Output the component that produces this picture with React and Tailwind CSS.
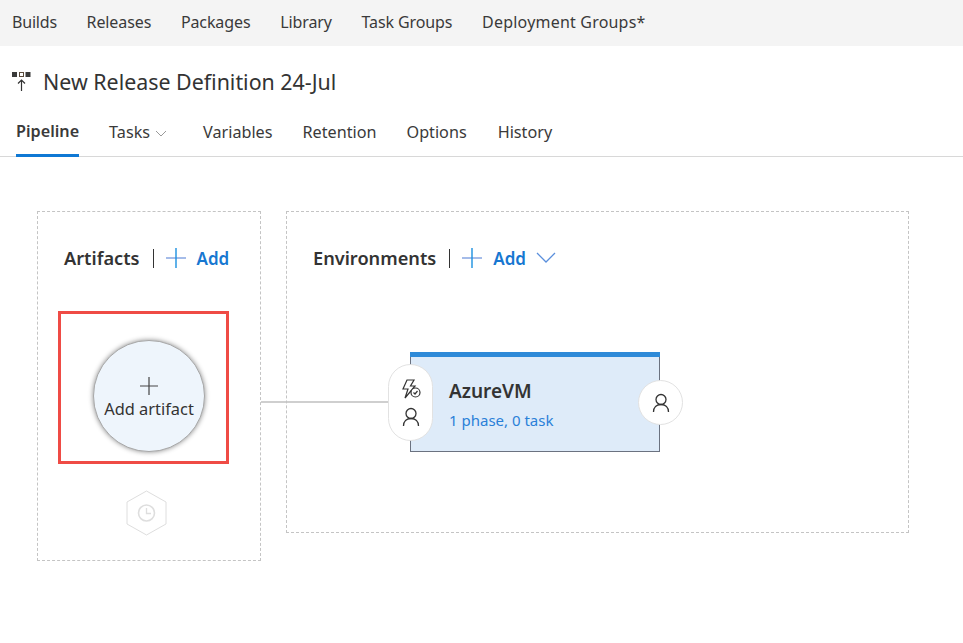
import React from "react";

const font = "font-['Noto_Sans','Open_Sans',sans-serif]";

const UserIcon = () => (
  <svg width="18" height="20" viewBox="0 0 18 20" fill="none" stroke="#333" strokeWidth="1.3">
    <circle cx="9" cy="6.5" r="5" />
    <path d="M1.5 19c0-4.5 3-7.5 7.5-7.5s7.5 3 7.5 7.5" />
  </svg>
);

const AddButton = () => (
  <div className="flex items-center">
    <svg width="20" height="20" viewBox="0 0 20 20" className="shrink-0">
      <path d="M0 10h20" stroke="#7f9fe0" strokeWidth="1.4" />
      <path d="M10 0v20" stroke="#1a90e0" strokeWidth="1.4" />
    </svg>
    <span className="ml-[11px] text-[17px] font-semibold text-[#1777d1] leading-none">Add</span>
  </div>
);

const App = () => {
  const topLinks = ["Builds", "Releases", "Packages", "Library", "Task Groups", "Deployment Groups*"];

  return (
    <div className={`${font} min-h-screen bg-white text-[#333]`}>
      <div className="h-[46px] bg-[#f4f4f4] flex items-center gap-[29.7px] pl-[12px] pb-[2px] text-[16px] text-[#3a3a3a]">
        {topLinks.map((l) => (
          <span key={l} className="first:tracking-[-0.2px] tracking-[-0.1px] last:tracking-[0.2px]">{l}</span>
        ))}
      </div>

      <div className="h-[70px] flex items-center pl-[12px] pt-[1px]">
        <svg width="19" height="20" viewBox="0 0 19 20" className="mr-[12px]">
          <rect x="0" y="0" width="5" height="5" fill="#3a3a3a" />
          <rect x="7.5" y="0.5" width="4" height="4" fill="#fff" stroke="#5a4a3a" />
          <rect x="13.5" y="0" width="5" height="5" fill="#3a3a3a" />
          <path d="M9.5 19V8M6 11.5l3.5-3.5 3.5 3.5" stroke="#333" strokeWidth="1.2" fill="none" />
        </svg>
        <h1 className="text-[21.4px] text-[#333] leading-none">New Release Definition 24-Jul</h1>
      </div>

      <div className="h-[41px] flex items-stretch pl-[16px] border-b border-[#d8d8d8] text-[16.2px] text-[#3a3a3a]">
        <div className="font-semibold border-b-[3px] border-[#0f78d4] h-[41px] flex items-center pb-[7px] mr-[30px]">Pipeline</div>
        <div className="flex items-center pb-[8px] mr-[36px]">
          Tasks
          <svg width="12" height="7" viewBox="0 0 12 7" fill="none" stroke="#999" className="ml-[5px] mt-[2px]">
            <path d="M1 1l5 5 5-5" />
          </svg>
        </div>
        <div className="flex items-center pb-[8px] mr-[30px]">Variables</div>
        <div className="flex items-center pb-[8px] mr-[30px]">Retention</div>
        <div className="flex items-center pb-[8px] mr-[31px]">Options</div>
        <div className="flex items-center pb-[8px]">History</div>
      </div>

      <div className="flex items-start pl-[37px] pt-[54px] gap-[25px]">
        <div className="relative w-[224px] h-[350px] border border-dashed border-[#c4c4c4] shrink-0">
          <div className="flex items-center pl-[26px] pt-[34px] h-[58px]">
            <span className="text-[18.2px] font-semibold text-[#333] leading-none">Artifacts</span>
            <div className="w-px h-[19px] bg-[#333] ml-[13px] mr-[12px]" />
            <AddButton />
          </div>

          <div className="ml-[20px] mt-[41px] w-[171px] h-[153px] border-[3px] border-[#ef4b45] pl-[32px] pt-[26px]">
            <div className="w-[112px] h-[112px] rounded-full bg-[#eef5fc] border border-[#a8a8a8] shadow-[0_0_5px_rgba(0,0,0,0.45)] flex flex-col items-center pt-[36px]">
              <svg width="18" height="18" viewBox="0 0 18 18">
                <path d="M0 9h18M9 0v18" stroke="#444" strokeWidth="1.2" />
              </svg>
              <span className="text-[16.4px] text-[#333] leading-[24px] mt-[2px] whitespace-nowrap">Add artifact</span>
            </div>
          </div>

          <div className="ml-[88px] mt-[26px] w-[41px] h-[46px]">
            <svg width="41" height="46" viewBox="0 0 41 46" fill="none" stroke="#dedede">
              <path d="M20.5 1L40 12v22L20.5 45 1 34V12z" />
              <circle cx="20.5" cy="23" r="8" strokeWidth="1.6" />
              <path d="M20.5 18v5.5h4.5" strokeWidth="1.3" />
            </svg>
          </div>
          <div className="absolute left-[223px] top-[189px] w-[127px] h-[2px] bg-[#cfcfcf]" />
        </div>

        <div className="relative w-[623px] h-[322px] border border-dashed border-[#c4c4c4] shrink-0">
          <div className="flex items-center pl-[26px] pt-[34px] h-[58px]">
            <span className="text-[18.2px] font-semibold text-[#333] leading-none">Environments</span>
            <div className="w-px h-[19px] bg-[#333] ml-[13px] mr-[12px]" />
            <AddButton />
            <svg width="20" height="12" viewBox="0 0 20 12" fill="none" stroke="#5a8fdc" strokeWidth="1.3" className="ml-[10px]">
              <path d="M1 1l9 9 9-9" />
            </svg>
          </div>

          <div className="relative ml-[123px] mt-[82px] w-[250px] h-[100px] bg-[#deebf9] border border-[#6b7280] border-t-0">
            <div className="h-[5px] -mx-px bg-[#2e8ad8]" />
            <div className="pl-[38px] pt-[22px]">
              <div className="text-[19px] font-semibold text-[#333] leading-[24px]">AzureVM</div>
              <div className="text-[15px] text-[#2a80d8] mt-[7px] leading-[20px]">1 phase, 0 task</div>
            </div>
            <div className="absolute left-[-23px] top-[12px] w-[45px] h-[77px] rounded-[23px] bg-white border border-[#e2e2e2] flex flex-col items-center pt-[14px] gap-[8px]">
              <svg width="20" height="20" viewBox="0 0 20 20" fill="none" stroke="#333" strokeWidth="1.2">
                <path d="M6 1h7L9.5 7h4.5L4 19l3-9H2z" />
                <circle cx="14.5" cy="13.5" r="4.5" fill="#fff" />
                <path d="M12.5 13.5l1.5 1.5 2.5-3" />
              </svg>
              <UserIcon />
            </div>
            <div className="absolute right-[-24px] top-[28px] w-[45px] h-[45px] rounded-full bg-white border border-[#e2e2e2] flex items-center justify-center">
              <UserIcon />
            </div>
          </div>
        </div>
      </div>
    </div>
  );
};

export default App;
